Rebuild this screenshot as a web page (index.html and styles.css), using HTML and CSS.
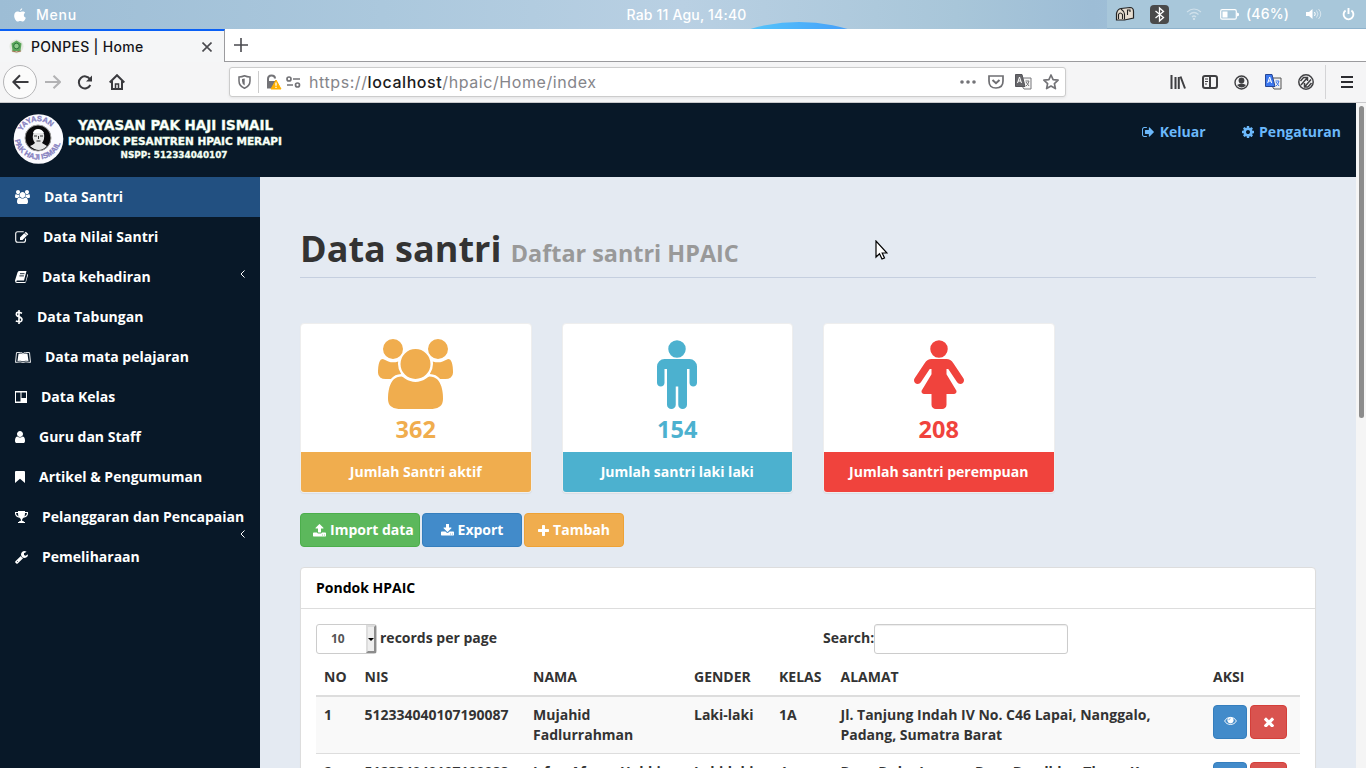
FILE: index.html
```html
<!DOCTYPE html>
<html lang="id">
<head>
<meta charset="utf-8">
<title>PONPES | Home</title>
<link rel="stylesheet" href="styles.css">
</head>
<body>
<svg width="0" height="0" class="defs">
  <symbol id="users" viewBox="-64 0 1920 1792"><path d="M529 896q-162 5-265 128h-134q-82 0-138-40.500t-56-118.500q0-353 124-353 6 0 43.500 21t97.500 42.500 119 21.500q67 0 133-23-5 37-5 66 0 139 81 256zm1071 637q0 120-73 189.500t-194 69.500h-874q-121 0-194-69.500t-73-189.500q0-53 3.500-103.500t14-109 26.500-108.500 43-97.500 62-81 85.500-53.500 111.500-20q10 0 43 21.500t73 48 107 48 135 21.500 135-21.500 107-48 73-48 43-21.500q61 0 111.500 20t85.500 53.500 62 81 43 97.500 26.500 108.500 14 109 3.500 103.500zm-1024-1277q0 106-75 181t-181 75-181-75-75-181 75-181 181-75 181 75 75 181zm704 384q0 159-112.500 271.500t-271.500 112.500-271.500-112.500-112.500-271.500 112.500-271.500 271.500-112.500 271.500 112.500 112.500 271.500zm576 225q0 78-56 118.500t-138 40.500h-134q-103-123-265-128 81-117 81-256 0-29-5-66 66 23 133 23 59 0 119-21.500t97.500-42.500 43.500-21q124 0 124 353zm-128-609q0 106-75 181t-181 75-181-75-75-181 75-181 181-75 181 75 75 181z"/></symbol>
  <symbol id="male" viewBox="384 0 1024 1792"><path d="M1408 704v416q0 40-28 68t-68 28-68-28-28-68v-352h-64v912q0 46-33 79t-79 33-79-33-33-79v-464h-64v464q0 46-33 79t-79 33-79-33-33-79v-912h-64v352q0 40-28 68t-68 28-68-28-28-68v-416q0-80 56-136t136-56h640q80 0 136 56t56 136zm-288-448q0 93-65.500 158.500t-158.500 65.500-158.500-65.500-65.500-158.500 65.500-158.500 158.500-65.500 158.500 65.500 65.500 158.500z"/></symbol>
  <symbol id="female" viewBox="256 0 1280 1792"><path d="M1536 1056q0 40-28 68t-68 28q-51 0-80-43l-227-341h-45v132l247 411q9 15 9 33 0 26-19 45t-45 19h-192v272q0 46-33 79t-79 33h-160q-46 0-79-33t-33-79v-272h-192q-26 0-45-19t-19-45q0-18 9-33l247-411v-132h-45l-227 341q-29 43-80 43-40 0-68-28t-28-68q0-29 16-53l256-384q73-107 176-107h384q103 0 176 107l256 384q16 24 16 53zm-416-800q0 93-65.500 158.500t-158.500 65.500-158.500-65.500-65.500-158.500 65.500-158.500 158.500-65.500 158.500 65.500 65.500 158.500z"/></symbol>
  <symbol id="eye" viewBox="0 0 14 10"><path d="M.7 5C3-.2 11-.2 13.300 5 11 10 3 10 .7 5z" fill="none" stroke="currentColor"/><circle cx="7" cy="4.300" r="3.300"/><path d="M5.200 4.200q0-1.800 1.800-1.800" fill="none" stroke="#428bca" stroke-width=".7"/></symbol>
  <symbol id="times" viewBox="302 302 1188 1188"><path d="M1490 1322q0 40-28 68l-136 136q-28 28-68 28t-68-28l-294-294-294 294q-28 28-68 28t-68-28l-136-136q-28-28-28-68t28-68l294-294-294-294q-28-28-28-68t28-68l136-136q28-28 68-28t68 28l294 294 294-294q28-28 68-28t68 28l136 136q28 28 28 68t-28 68l-294 294 294 294q28 28 28 68z"/></symbol>
</svg>

<header class="desktop-bar">
  <div class="desk-left">
    <svg width="12" height="14" viewBox="0 0 12 14"><path d="M8.300 0q.1 2-2.300 3.200Q5.900 1 8.300 0zM6 4c.8 0 1.500-.7 2.800-.6 1 0 1.900.5 2.400 1.300-2 1.300-1.800 4 .6 5-.7 2-1.900 3.800-3 3.800-1 0-1.500-.6-2.600-.6s-1.500.6-2.500.6C2 13.500 0 10 .2 7.400.3 4.900 1.800 3.500 3.500 3.500 4.600 3.500 5.300 4 6 4z" fill="#fff"/></svg>
    <span class="t-menu">Menu</span>
  </div>
  <div class="desk-date">Rab 11 Agu, 14:40</div>
  <div class="glow"></div>
  <div class="tray">
    <svg width="20" height="16" viewBox="0 0 20 16"><path d="M1.500 14V7.500Q2.500 3 6 2.500l9-1q3.500 0 3.500 4V12l-9 2z" fill="#e6ddd0" stroke="#222" stroke-width="1.200"/><path d="M3.500 13V8.500q1.500-3 4 0V13M9.500 13.500V8q-.5-3-3.500-5M12.500 9V4h2.500v2" fill="none" stroke="#222" stroke-width="1.100"/></svg>
    <svg width="19" height="19" viewBox="0 0 19 19"><rect width="19" height="19" rx="4" fill="#4a4a4a"/><path d="M5.500 6l8 6.500-4 3.500V3l4 3.500-8 6.500" fill="none" stroke="#fff" stroke-width="1.300"/></svg>
    <svg width="16" height="12" viewBox="0 0 16 12" fill="none" stroke="#fff" opacity=".45" stroke-width="1.200"><path d="M1 4q7-6 14 0M3.500 6.500q4.500-4 9 0M6 9q2-2 4 0"/><circle cx="8" cy="11" r=".6"/></svg>
    <svg width="20" height="11" viewBox="0 0 20 11"><rect x=".7" y=".7" width="15.600" height="9.500" rx="1.500" fill="none" stroke="#fff" stroke-width="1.200"/><path d="M2.500 2.500h5v6h-5zM17 3.500l2 1v2l-2 1z" fill="#fff"/></svg>
    <span class="t-bat">(46%)</span>
    <svg width="16" height="12" viewBox="0 0 16 12" fill="none" stroke="#fff"><path d="M0 4h3l3.500-3v10L3 8H0z" fill="#fff" stroke="none"/><path d="M8.500 4q1.500 2 0 4"/><path d="M10.500 2.500q3 3.500 0 7M12.500 1q4.500 5 0 10" opacity=".55"/></svg>
    <svg width="13" height="13" viewBox="0 0 13 13" fill="none" stroke="#fff" stroke-width="1.900"><path d="M3.600 2.500a4.900 4.900 0 1 0 5.800 0M6.500 0v6"/></svg>
  </div>
</header>

<div class="tab-bar">
  <div class="tab">
    <svg width="15" height="15" viewBox="0 0 15 15"><circle cx="7.500" cy="7.500" r="7" fill="#e3e8df"/><path d="M7.500 1.500l5 3-1 7.500H3.500L2.500 4.500z" fill="#5ba65a"/><circle cx="7.500" cy="7" r="2.800" fill="#8fc98b" stroke="#28753a"/><path d="M3 12q4.500 2 9 0" stroke="#a0714f" fill="none"/></svg>
    <span class="t-tab">PONPES | Home</span>
    <svg class="tab-x" width="10" height="10" viewBox="0 0 10 10" stroke="#4a4a4f" stroke-width="1.600"><path d="M.5.500l9 9M9.500.500l-9 9"/></svg>
  </div>
  <div class="new-tab"><svg width="14" height="14" viewBox="0 0 14 14" stroke="#4a4a4f" stroke-width="1.600"><path d="M7 0v14M0 7h14"/></svg></div>
</div>

<div class="nav-bar">
  <div class="nav-left">
    <span class="back"><svg width="17" height="16" viewBox="0 0 17 16" fill="none" stroke="#3a3a3e" stroke-width="2"><path d="M16.500 8H1.500M8 1.200L1.300 8 8 14.800"/></svg></span>
    <svg width="16" height="14" viewBox="0 0 16 14" fill="none" stroke="#b2b2b4" stroke-width="2"><path d="M0 7h15M8.500.7L15 7l-6.500 6.300"/></svg>
    <svg width="16" height="15" viewBox="0 0 16 15" fill="none" stroke="#3a3a3e" stroke-width="2"><path d="M13 4.200A6 6 0 1 0 13.300 10"/><path d="M15 .5v6H9z" fill="#3a3a3e" stroke="none"/></svg>
    <svg width="16" height="16" viewBox="0 0 16 16" fill="none" stroke="#3a3a3e" stroke-width="2"><path d="M.7 8.500L8 1.200l7.300 7.300M3 7v8h10V7"/><path d="M6.500 15v-5h3v5" stroke-width="1.500"/></svg>
  </div>
  <div class="url">
    <svg width="13" height="14" viewBox="0 0 13 14" fill="none" stroke="#6f6f73" stroke-width="1.500"><path d="M1 2Q4 2 6.500.8 9 2 12 2v4q0 5-5.500 7.200Q1 11 1 6z"/><path d="M6.700 3.500v7Q4 9 4 6V4z" fill="#6f6f73" stroke="none"/></svg>
    <i class="url-sep"></i>
    <svg width="16" height="16" viewBox="0 0 16 16"><path d="M2 7V5q0-3.500 3.500-3.500T9 4.500" fill="none" stroke="#737377" stroke-width="2"/><path d="M1 7h9v7.500H1z" fill="#737377"/><path d="M10 6l5 9H5z" fill="#ffb100" stroke="#ffb100"/><path d="M10 8.500v3.300M10 12.800v1.300" stroke="#fff" stroke-width="1.300"/></svg>
    <svg width="15" height="12" viewBox="0 0 15 12" fill="none" stroke="#737377" stroke-width="1.700"><circle cx="3" cy="3" r="2"/><path d="M7 3h7M1 9h6"/><circle cx="11.500" cy="9" r="2"/></svg>
    <span class="t-url">https://<b>localhost</b>/hpaic/Home/index</span>
    <svg class="push" width="16" height="4" viewBox="0 0 16 4" fill="#737377"><circle cx="2" cy="2" r="1.800"/><circle cx="8" cy="2" r="1.800"/><circle cx="14" cy="2" r="1.800"/></svg>
    <svg class="pocket" width="16" height="14" viewBox="0 0 16 14" fill="none" stroke="#6f6f73" stroke-width="1.700"><path d="M1 1h14v5q0 7-7 7T1 6z"/><path d="M4.500 5L8 8.200 11.500 5" stroke-width="2"/></svg>
    <svg class="trans" width="17" height="16" viewBox="0 0 17 16"><path d="M8 4h8v11H9L7 12" fill="#f5f5f5" stroke="#77777a"/><path d="M.5.500H7l3 12H.5z" fill="#66666a" stroke="#55555a"/><path d="M2.500 9l2-6 2 6M3 7h3" fill="none" stroke="#fff"/><path d="M10.500 7h3.500q-1 4-3 5M11 8l3 4" fill="none" stroke="#77777a"/></svg>
    <svg width="16" height="16" viewBox="0 0 16 16" fill="none" stroke="#737377" stroke-width="1.700" stroke-linejoin="round"><path d="M8 1l2.100 4.600 5 .6-3.700 3.400 1 5L8 12l-4.400 2.600 1-5L.9 6.200l5-.6z"/></svg>
  </div>
  <div class="nav-right">
    <svg width="16" height="14" viewBox="0 0 16 14" stroke="#3f3f42" stroke-width="2"><path d="M1.500 0v14M5.500 2v12M8.800 2v12M10.500 1.500l4.500 12"/></svg>
    <svg width="16" height="14" viewBox="0 0 16 14" fill="none" stroke="#3f3f42" stroke-width="2"><rect x="1" y="1" width="14" height="12" rx="2"/><path d="M8 1v12"/><path d="M3 4h3M3 6.500h3M3 9h2" stroke-width="1"/></svg>
    <svg width="15" height="15" viewBox="0 0 15 15"><circle cx="7.500" cy="7.500" r="6.500" fill="none" stroke="#3f3f42" stroke-width="1.400"/><circle cx="7.500" cy="5.500" r="2.900" fill="#3f3f42"/><path d="M3 10q4.500-3 9 0-4 5-9 0z" fill="#3f3f42"/></svg>
    <svg width="17" height="16" viewBox="0 0 17 16"><path d="M8 4h8v11H9L7 12" fill="#eee" stroke="#555"/><path d="M.5.500H7l3 12H.5z" fill="#3c78f0" stroke="#274694"/><path d="M2.700 9l2-6 2 6M3.200 7h3" fill="none" stroke="#fff"/><path d="M10.500 7H14q-1 4-3 5M11 8l3 4" fill="none" stroke="#3c78f0"/></svg>
    <svg width="16" height="16" viewBox="0 0 16 16" fill="none" stroke="#3f3f42" stroke-width="1.500"><circle cx="8" cy="8" r="7.200"/><path d="M3 11l6.500-7.500M6.500 13L13 5.500M6 3.500h3.500V7M6.500 9v4H10M2.500 7L6 3M10 13l3.500-4"/></svg>
    <i class="nav-sep"></i>
    <svg width="12" height="12" viewBox="0 0 12 12" stroke="#2c2c30" stroke-width="2"><path d="M0 1h12M0 6h12M0 11h12"/></svg>
  </div>
</div>

<div class="viewport">
  <div class="page">
    <div class="site-head">
      <svg class="logo" width="274" height="56" viewBox="0 0 274 56">
        <defs><path id="arcTop" d="M8.500 24a18 18 0 0 1 35 0"/><path id="arcBot" d="M2.500 25a23.500 23.500 0 0 0 47 0"/></defs>
        <circle cx="26.500" cy="28" r="24.800" fill="#fbfbff"/>
        <circle cx="26" cy="27" r="13" fill="#0a0a0c" stroke="#999"/>
        <path d="M18 35q3-1 5-3-3-4-2-8 .5-5 5-5t6 4q1 5-2 9l5 3q-8 8-17 0z" fill="#e6e6e6"/>
        <path d="M21 22q1-4 5-4t6 4z" fill="#fff"/>
        <path d="M22 25h3M28 25h3M26.500 25v3M24.500 30h4" fill="none" stroke="#333"/>
        <text class="ring-text"><textPath href="#arcTop" startOffset="4">YAYASAN</textPath></text>
        <text class="ring-text"><textPath href="#arcBot" startOffset="4">PAK HAJI ISMAIL</textPath></text>
        <text class="logo-text" x="66" y="18.500" font-size="13.500" textLength="195" lengthAdjust="spacingAndGlyphs">YAYASAN PAK HAJI ISMAIL</text>
        <text class="logo-text" x="56" y="34" font-size="10.500" textLength="214" lengthAdjust="spacingAndGlyphs">PONDOK PESANTREN HPAIC MERAPI</text>
        <text class="logo-text" x="108.500" y="47" font-size="9.500" textLength="107" lengthAdjust="spacingAndGlyphs">NSPP: 512334040107</text>
      </svg>
      <nav class="head-links">
        <a><svg width="12" height="10" viewBox="64 256 1568 1280"><path d="M704 1440q0 4 1 20t.5 26.500-3 23.500-10 19.500-20.500 6.500h-320q-119 0-203.500-84.500t-84.500-203.500v-704q0-119 84.500-203.500t203.500-84.500h320q13 0 22.500 9.500t9.500 22.500q0 4 1 20t.5 26.500-3 23.500-10 19.500-20.500 6.500h-320q-66 0-113 47t-47 113v704q0 66 47 113t113 47h312l11.500 1 11.500 3 8 5.500 7 9 2 13.500zm928-544q0 26-19 45l-544 544q-19 19-45 19t-45-19-19-45v-288h-448q-26 0-45-19t-19-45v-384q0-26 19-45t45-19h448v-288q0-26 19-45t45-19 45 19l544 544q19 19 19 45z"/></svg>Keluar</a>
        <a><svg width="12" height="12" viewBox="128 128 1536 1536"><path d="M1152 896q0-106-75-181t-181-75-181 75-75 181 75 181 181 75 181-75 75-181zm512-109v222q0 12-8 23t-20 13l-185 28q-19 54-39 91 35 50 107 138 10 12 10 25t-9 23q-27 37-99 108t-94 71q-12 0-26-9l-138-108q-44 23-91 38-16 136-29 186-7 28-36 28h-222q-14 0-24.500-8.500t-11.500-21.500l-28-184q-49-16-90-37l-141 107q-10 9-25 9-14 0-25-11-126-114-165-168-7-10-7-23 0-12 8-23 15-21 51-66.500t54-70.500q-27-50-41-99l-183-27q-13-2-21-12.500t-8-23.500v-222q0-12 8-23t19-13l186-28q14-46 39-92-40-57-107-138-10-12-10-24 0-10 9-23 26-36 98.500-107.500t94.500-71.500q13 0 26 10l138 107q44-23 91-38 16-136 29-186 7-28 36-28h222q14 0 24.500 8.500t11.500 21.500l28 184q49 16 90 37l142-107q9-9 24-9 13 0 25 10 129 119 165 170 7 8 7 22 0 12-8 23-15 21-51 66.500t-54 70.500q26 50 41 98l183 28q13 2 21 12.500t8 23.500z"/></svg>Pengaturan</a>
      </nav>
    </div>
    <div class="columns">
      <aside class="side">
        <a class="item active"><svg width="15" height="14"><use href="#users"/></svg>Data Santri</a>
        <a class="item"><svg width="14" height="12" viewBox="0 0 14 12"><path d="M10.500 7.500v1.800q0 2-2 2H2.700q-2 0-2-2V2.700q0-2 2-2h6" fill="none" stroke="#fff" stroke-width="1.100"/><path d="M5 9V6.500L10.800.7l2.500 2.500L7.500 9z"/><path d="M9.500 2l2.500 2.500" stroke="#081828" stroke-width=".7"/></svg>Data Nilai Santri</a>
        <a class="item"><svg width="13" height="12" viewBox="0 0 13 12"><path d="M4 0h7.500L9 9.500H2q-1.500 1 0 1.500h8.500L12.500 3q.8.500.4 1.500L11 11q-.4 1-1.500 1H2Q0 12 0 9.500L2.500 1.500Q3 0 4 0z"/><path d="M5 2.700h4.500M4.400 4.900h4.500" stroke="#081828" stroke-width=".9"/></svg>Data kehadiran<svg class="caret" width="5" height="8" viewBox="0 0 5 8"><path d="M4.500.5L1 4l3.500 3.500" fill="none" stroke="#fff"/></svg></a>
        <a class="item"><svg width="8" height="14" viewBox="0 0 8 14"><path d="M7 3.200Q1.300 1 1.300 4.200 1.300 6 4 6.700q3 .8 3 3Q6.800 13 .8 11M4 0v14" fill="none" stroke="#fff" stroke-width="1.600"/></svg>Data Tabungan</a>
        <a class="item"><svg width="16" height="11" viewBox="0 0 16 11"><path d="M1.500.6q5-1 6.500 1 1.500-2 6.500-1l1 9.800q-5.500-1-7.500 0-2-1-7.500 0z" fill="none" stroke="#fff" stroke-width=".9"/><path d="M3.500 1.700Q6.500 1 8 2.300 9.500 1 12.500 1.700L13.500 9Q10 8.200 8 9.300 6 8.200 2.500 9z"/></svg>Data mata pelajaran</a>
        <a class="item"><svg width="12" height="12" viewBox="0 0 12 12"><path fill-rule="evenodd" d="M0 0h12v12H0zM1 1.500v9h4.500v-9zM6.500 1.500V7H11V1.500z"/></svg>Data Kelas</a>
        <a class="item"><svg width="10" height="12" viewBox="256 128 1280 1536"><path d="M1536 1399q0 109-62.500 187t-150.500 78h-854q-88 0-150.500-78t-62.500-187q0-85 8.500-160.500t31.500-152 58.500-131 94-89 134.500-34.500q131 128 313 128t313-128q76 0 134.500 34.500t94 89 58.500 131 31.500 152 8.500 160.500zm-256-887q0 159-112.500 271.500t-271.500 112.500-271.500-112.500-112.500-271.500 112.500-271.500 271.500-112.500 271.500 112.500 112.500 271.500z"/></svg>Guru dan Staff</a>
        <a class="item"><svg width="10" height="12" viewBox="0 0 10 12"><path d="M1 0h8q1 0 1 1v11L5 7.700 0 12V1q0-1 1-1z"/></svg>Artikel &amp; Pengumuman</a>
        <a class="item"><svg width="13" height="12" viewBox="0 0 13 12"><path d="M3 0h7v1h3v2q-.5 3-4.500 3.800-.8.700-1.300 1.500V10h1.500v1H10v1H3v-1h1.300v-1h1.500V8.300q-.5-.8-1.300-1.500Q.5 6 0 3V1h3zM1 2q0 2.500 2.500 3.400Q3 4 3 2zM12 2h-2q0 2-.5 3.400Q12 4.500 12 2z" fill-rule="evenodd"/></svg>Pelanggaran dan Pencapaian<svg class="caret low" width="5" height="8" viewBox="0 0 5 8"><path d="M4.500.5L1 4l3.500 3.500" fill="none" stroke="#fff"/></svg></a>
        <a class="item"><svg width="13" height="13" viewBox="64 128 1664 1664"><path d="M448 1472q0-26-19-45t-45-19-45 19-19 45 19 45 45 19 45-19 19-45zm644-420l-682 682q-37 37-90 37-52 0-91-37l-106-108q-38-36-38-90 0-53 38-91l681-681q39 98 114.500 173.500t173.500 114.500zm634-435q0 39-23 106-47 134-164.500 217.500t-258.500 83.500q-185 0-316.500-131.500t-131.500-316.500 131.500-316.500 316.500-131.500q58 0 121.500 16.500t107.500 46.500q16 11 16 28t-16 28l-293 169v224l193 107q5-3 79-48.500t135.500-81 70.500-35.500q15 0 23.500 10t8.500 25z"/></svg>Pemeliharaan</a>
      </aside>
      <main class="content">
        <h1>Data santri <small>Daftar santri HPAIC</small></h1>
        <div class="stats">
          <div class="stat orange"><div class="stat-top"><svg width="75" height="70"><use href="#users"/></svg><strong>362</strong></div><div class="stat-foot">Jumlah Santri aktif</div></div>
          <div class="stat blue"><div class="stat-top"><svg width="40" height="70"><use href="#male"/></svg><strong>154</strong></div><div class="stat-foot">Jumlah santri laki laki</div></div>
          <div class="stat red"><div class="stat-top"><svg width="50" height="70"><use href="#female"/></svg><strong>208</strong></div><div class="stat-foot">Jumlah santri perempuan</div></div>
        </div>
        <div class="actions">
          <a class="btn green"><svg width="13" height="13" viewBox="64 128 1664 1536"><path d="M1344 1472q0-26-19-45t-45-19-45 19-19 45 19 45 45 19 45-19 19-45zm256 0q0-26-19-45t-45-19-45 19-19 45 19 45 45 19 45-19 19-45zm128-224v320q0 40-28 68t-68 28h-1472q-40 0-68-28t-28-68v-320q0-40 28-68t68-28h427q21 56 70.500 92t110.500 36h256q61 0 110.500-36t70.500-92h427q40 0 68 28t28 68zm-325-648q-17 40-59 40h-256v448q0 26-19 45t-45 19h-256q-26 0-45-19t-19-45v-448h-256q-42 0-59-40-17-39 14-69l448-448q18-19 45-19t45 19l448 448q31 30 14 69z"/></svg>Import data</a>
          <a class="btn primary"><svg width="13" height="13" viewBox="64 128 1664 1536"><path d="M1344 1344q0-26-19-45t-45-19-45 19-19 45 19 45 45 19 45-19 19-45zm256 0q0-26-19-45t-45-19-45 19-19 45 19 45 45 19 45-19 19-45zm128-224v320q0 40-28 68t-68 28h-1472q-40 0-68-28t-28-68v-320q0-40 28-68t68-28h465l135 136q58 56 136 56t136-56l136-136h464q40 0 68 28t28 68zm-325-569q17 41-14 70l-448 448q-18 19-45 19t-45-19l-448-448q-31-29-14-70 17-39 59-39h256v-448q0-26 19-45t45-19h256q26 0 45 19t19 45v448h256q42 0 59 39z"/></svg>Export</a>
          <a class="btn warn"><svg width="11" height="11" viewBox="192 128 1408 1408"><path d="M1600 736v192q0 40-28 68t-68 28h-416v416q0 40-28 68t-68 28h-192q-40 0-68-28t-28-68v-416h-416q-40 0-68-28t-28-68v-192q0-40 28-68t68-28h416v-416q0-40 28-68t68-28h192q40 0 68 28t28 68v416h416q40 0 68 28t28 68z"/></svg>Tambah</a>
        </div>
        <section class="panel">
          <div class="panel-head">Pondok HPAIC</div>
          <div class="panel-body">
            <div class="filters">
              <div class="half"><span class="select">10<i class="arrow"></i></span>records per page</div>
              <div class="half">Search:<input class="field" type="text"></div>
            </div>
            <table class="grid">
              <colgroup><col class="c-no"><col class="c-nis"><col class="c-nama"><col class="c-gender"><col class="c-kelas"><col class="c-alamat"><col class="c-aksi"></colgroup>
              <thead><tr><th>NO</th><th>NIS</th><th>NAMA</th><th>GENDER</th><th>KELAS</th><th>ALAMAT</th><th>AKSI</th></tr></thead>
              <tbody>
                <tr class="odd"><td>1</td><td>512334040107190087</td><td>Mujahid<br>Fadlurrahman</td><td>Laki-laki</td><td>1A</td><td>Jl. Tanjung Indah IV No. C46 Lapai, Nanggalo,<br>Padang, Sumatra Barat</td><td><div class="row-btns"><a class="btn primary view"><svg width="13" height="10"><use href="#eye"/></svg></a><a class="btn danger"><svg width="10" height="10"><use href="#times"/></svg></a></div></td></tr>
                <tr><td>2</td><td>512334040107190088</td><td>Irfan Afroos Hakki</td><td>Laki-laki</td><td>4</td><td>Desa Duku Lareng, Desa Bandkhu, Theng K</td><td><div class="row-btns"><a class="btn primary view"><svg width="13" height="10"><use href="#eye"/></svg></a><a class="btn danger"><svg width="10" height="10"><use href="#times"/></svg></a></div></td></tr>
              </tbody>
            </table>
          </div>
        </section>
      </main>
    </div>
  </div>
  <div class="scroll"><i class="thumb"></i></div>
</div>
<svg class="cursor" width="13" height="20" viewBox="0 0 13 20"><path d="M1 1v16l3.500-3.300L7 19l2.500-1-2.300-5H12z" fill="#fff" stroke="#000" stroke-width="1.200"/></svg>
</body>
</html>
```
FILE: styles.css
```css
* { box-sizing: border-box; }
html, body { height: 100%; }
body { margin: 0; overflow: hidden; display: flex; flex-direction: column; font: 700 14px/20px "Open Sans", sans-serif; color: #333; background: #fff; }
svg { flex: none; display: block; }
svg:not([fill]) { fill: currentColor; }
.defs { position: absolute; }

/* desktop top bar */
.desktop-bar { position: relative; flex: none; height: 29px; overflow: hidden; display: grid; grid-template-columns: 1fr auto 1fr; align-items: center; color: #fff; font: 500 14px/20px Inter, sans-serif; background: linear-gradient(90deg, #9dbdd5 0, #abc8dd 28%, #b9d0e3 50%, #a8c6d9 70%, #9dbdd6 80%, #a6c4da 90%); }
.desk-left { display: flex; align-items: center; gap: 10px; padding-left: 14px; }
.desk-date { letter-spacing: .18px; padding-left: 7px; }
.t-menu { letter-spacing: .8px; }
.glow { position: absolute; left: 627px; top: 22px; width: 344px; height: 344px; border-radius: 50%; background: linear-gradient(90deg, #55c4fa 36%, #46a0fa 64%); }
.tray { justify-self: end; display: flex; align-items: center; height: 29px; width: 259px; padding-left: 8px; background: #a8c7da; border-bottom: 1px solid #8eb2cc; }
.tray svg + svg { margin-left: 15px; }
.tray svg:nth-child(3) { margin-left: 17px; }
.tray svg:nth-child(4) { margin-left: 18px; }
.t-bat { width: 43px; margin-left: 6px; letter-spacing: .2px; }
.tray .t-bat + svg { margin-left: 17px; }
.tray svg:last-child { margin-left: 20px; }

/* browser tabs */
.tab-bar { flex: none; height: 33px; display: flex; background: #fff; border-bottom: 1px solid #9b9b9e; }
.tab { width: 225px; height: 33px; display: flex; align-items: center; padding: 0 12px 0 9px; background: #f5f6f7; border-top: 2px solid #0a60f5; border-right: 1px solid #9b9b9e; }
.t-tab { margin-left: 7px; font: 500 14px/20px Inter, sans-serif; color: #15151a; letter-spacing: .3px; white-space: nowrap; }
.tab-x { margin-left: auto; }
.new-tab { padding: 9px; }

/* browser toolbar */
.nav-bar { flex: none; height: 41px; display: flex; align-items: center; background: #f5f5f6; border-bottom: 1px solid #c9c9cb; }
.nav-left { display: flex; align-items: center; width: 229px; padding-left: 3px; }
.back { width: 34px; height: 34px; border: 1px solid #b5b5b7; border-radius: 50%; background: #fbfbfb; display: flex; align-items: center; justify-content: center; margin-right: 8px; }
.nav-left svg + svg { margin-left: 16px; }
.url { width: 837px; height: 30px; display: flex; align-items: center; padding: 0 6px 0 8px; background: #fff; border: 1px solid #ccc; border-radius: 3px; box-shadow: 0 1px 3px rgba(0,0,0,.08); }
.url-sep { width: 1px; height: 22px; margin: 0 7px; background: #ccc; }
.url-sep + svg + svg { margin-left: 4px; }
.t-url { margin-left: 8px; font: 400 16px/22px Inter, sans-serif; letter-spacing: .58px; color: #85858a; white-space: nowrap; }
.t-url b { color: #1b1b20; font-weight: 500; }
.push { margin-left: auto; }
.pocket { margin-left: 12px; }
.trans { margin: 0 11px; }
.nav-right { display: flex; align-items: center; margin-left: 104px; gap: 16px; }
.nav-sep { width: 1px; height: 34px; margin-left: -5px; background: #d4d4d6; }
.nav-sep + svg { margin-left: -1px; }

/* page */
.viewport { flex: 1; min-height: 0; display: flex; overflow: hidden; }
.page { width: 1356px; display: flex; flex-direction: column; }
.scroll { width: 10px; background: #f5f5f5; padding: 3px 2px 0 3px; }
.thumb { display: block; height: 312px; border-radius: 4px; background: #8c8c8c; }
.site-head { flex: none; height: 74px; display: flex; justify-content: space-between; background: #081828; padding: 8px 15px 0 12px; }
.logo-text { font-family: "DejaVu Sans", sans-serif; font-weight: 700; fill: #fff; stroke: #dff5df; stroke-width: .4; }
.ring-text { font: 700 7.500px "Liberation Sans", sans-serif; fill: #8580c0; stroke: #8580c0; stroke-width: .3; }
.head-links { display: flex; gap: 36.500px; padding-top: 11px; color: #6bb8fb; }
.head-links a { display: flex; align-items: center; height: 20px; gap: 6px; }
.head-links a + a { gap: 5px; }
.columns { flex: 1; min-height: 0; display: flex; }
.side { width: 260px; flex: none; background: #081828; color: #fff; }
.item { position: relative; display: flex; align-items: center; gap: 14px; height: 40px; padding-left: 15px; white-space: nowrap; }
.item.active { background: #225081; }
.item .caret { position: absolute; left: 240px; top: 13px; }
.item .caret.low { top: 33px; }
.content { flex: 1; min-width: 0; background: #e4eaf2; padding: 51px 40px 0; overflow: hidden; }
h1 { margin: 0 0 45px; height: 50px; font-size: 36px; line-height: 42px; border-bottom: 1px solid #c5cfdf; white-space: nowrap; }
h1 small { font-size: 23.400px; color: #999; }
.stats { display: flex; gap: 30px; }
.stat { width: 231.500px; height: 170px; border: 1px solid #eee; border-radius: 4px; background: #fff; overflow: hidden; box-shadow: 0 1px 1px rgba(0,0,0,.05); }
.stat-top { height: 128px; padding-top: 15px; display: flex; flex-direction: column; align-items: center; color: var(--c); }
.stat-top strong { font-size: 23.500px; font-weight: 700; line-height: 26px; margin-top: 7px; }
.stat-foot { height: 40px; text-align: center; line-height: 40px; color: #fff; background: var(--c); }
.orange { --c: #f0ad4e; }
.blue { --c: #4cb1cf; }
.red { --c: #f0433d; }
.actions { display: flex; gap: 2px; margin: 20px 0 20px; }
.btn { display: flex; align-items: center; justify-content: center; gap: 4px; width: 100px; height: 34px; border: 1px solid; border-radius: 4px; white-space: nowrap; }
.btn svg { color: #fff; }
.actions .btn { color: #fff; border-color: var(--b); }
.green { --b: #4cae4c; background: #5cb85c; }
.btn.green { width: 120px; justify-content: flex-start; padding-left: 12px; }
.primary { --b: #357ebd; background: #428bca; }
.warn { --b: #eea236; background: #f0ad4e; }
.danger { --b: #d43f3a; background: #d9534f; }
.panel { height: 400px; background: #fff; border: 1px solid #ddd; border-radius: 4px; box-shadow: 0 1px 1px rgba(0,0,0,.05); }
.panel-head { height: 41px; padding: 10px 15px; color: #000; border-bottom: 1px solid #ddd; }
.panel-body { padding: 15px; }
.filters { display: flex; height: 35px; }
.half { flex: none; width: 507px; display: flex; align-items: flex-start; line-height: 28px; }
.select { display: flex; align-items: center; width: 61px; height: 30px; padding-left: 14px; margin-right: 3px; border: 1px solid #ccc; border-radius: 3px; color: #555; font-size: 12px; position: relative; }
.arrow { position: absolute; right: 0; top: 0; width: 10px; height: 28px; background: #eee; border: 2px solid #ddd; border-right-color: #8c8c8c; border-bottom-color: #8c8c8c; }
.arrow::after { content: ""; position: absolute; left: 0; top: 11px; border: 3px solid transparent; border-top-color: #000; }
.field { width: 194px; height: 30px; border: 1px solid #ccc; border-radius: 3px; box-shadow: inset 0 1px 1px rgba(0,0,0,.075); background: #fff; }
.grid { width: 984px; table-layout: fixed; border-collapse: collapse; }
.grid th { text-align: left; height: 37px; padding: 8px; vertical-align: bottom; border-bottom: 2px solid #ddd; }
.grid td { height: 57px; padding: 8px; vertical-align: top; border-bottom: 1px solid #ddd; white-space: nowrap; }
.odd td { background: #f9f9f9; }
.c-no { width: 40.500px; } .c-nis { width: 168.500px; } .c-nama { width: 161px; } .c-gender { width: 85px; } .c-kelas { width: 61.500px; } .c-alamat { width: 372.500px; } .c-aksi { width: 95px; }
.row-btns { display: flex; gap: 3px; }
.row-btns .btn { width: 37px; border-color: var(--b); }
.row-btns .btn.view { width: 34px; padding-bottom: 2px; }
.cursor { position: absolute; left: 875px; top: 240px; }
```
